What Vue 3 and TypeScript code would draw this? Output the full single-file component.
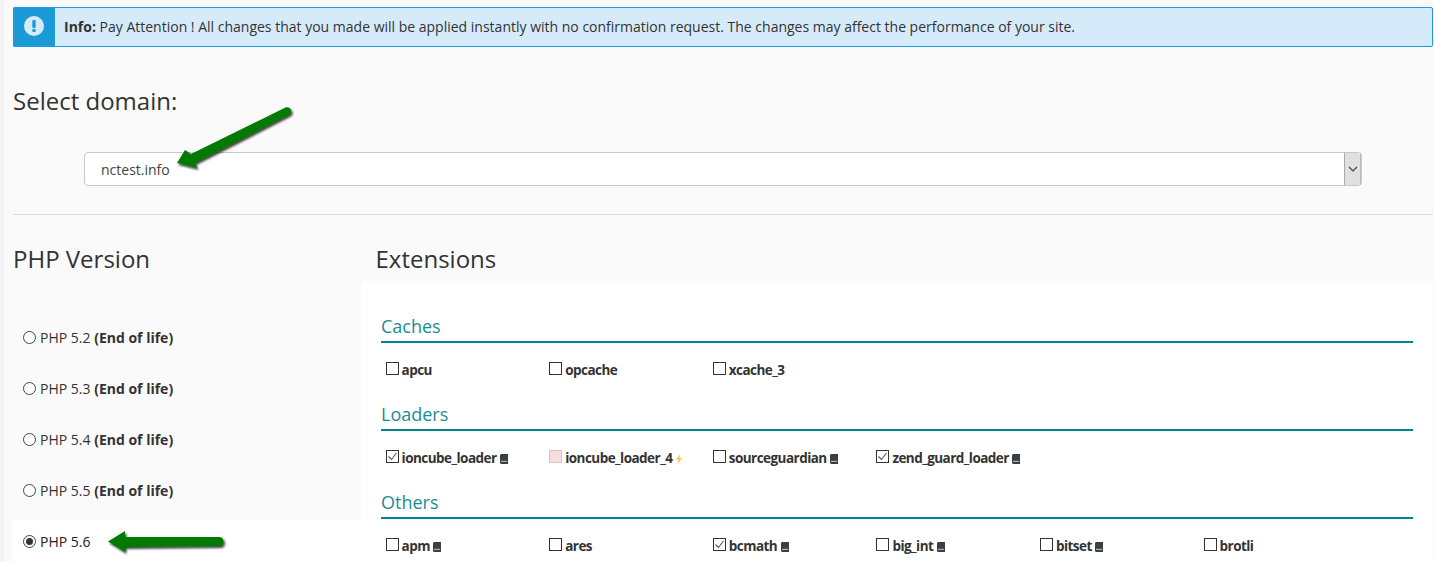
<script setup lang="ts">
interface Ext { name: string; checked?: boolean; icon?: 'book' | 'bolt'; disabled?: boolean }
const versions = [
  { label: 'PHP 5.2', eol: true },
  { label: 'PHP 5.3', eol: true },
  { label: 'PHP 5.4', eol: true },
  { label: 'PHP 5.5', eol: true },
  { label: 'PHP 5.6', eol: false },
]
const groups: { title: string; items: Ext[] }[] = [
  { title: 'Caches', items: [{ name: 'apcu' }, { name: 'opcache' }, { name: 'xcache_3' }] },
  { title: 'Loaders', items: [
    { name: 'ioncube_loader', checked: true, icon: 'book' },
    { name: 'ioncube_loader_4', disabled: true, icon: 'bolt' },
    { name: 'sourceguardian', icon: 'book' },
    { name: 'zend_guard_loader', checked: true, icon: 'book' },
  ] },
  { title: 'Others', items: [
    { name: 'apm', icon: 'book' },
    { name: 'ares' },
    { name: 'bcmath', checked: true, icon: 'book' },
    { name: 'big_int', icon: 'book' },
    { name: 'bitset', icon: 'book' },
    { name: 'brotli' },
  ] },
]
</script>

<template>
  <div class="page">
    <div class="alert">
      <div class="alert-icon">
        <svg width="20" height="20" viewBox="0 0 20 20"><circle cx="10" cy="10" r="10" fill="#d6ebf9" /><rect x="8.300" y="4" width="3.400" height="8" rx="1" fill="#1a9bd8" /><rect x="8.300" y="13" width="3.400" height="3" rx="1" fill="#1a9bd8" /></svg>
      </div>
      <div class="alert-text"><b>Info:</b> Pay Attention ! All changes that you made will be applied instantly with no confirmation request. The changes may affect the performance of your site.</div>
    </div>

    <h2 class="domain-title">Select domain:</h2>
    <div class="select">
      <span class="select-value">nctest.info</span>
      <span class="select-btn">
        <svg width="10" height="6" viewBox="0 0 10 6"><path d="M1 1l4 4 4-4" fill="none" stroke="#444" stroke-width="1.200" /></svg>
      </span>
    </div>
    <div class="divider"></div>

    <div class="columns">
      <div class="left">
        <h2 class="col-title">PHP Version</h2>
        <div class="versions">
          <label v-for="v in versions" :key="v.label" class="version" :class="{ current: !v.eol }">
            <span class="radio" :class="{ on: !v.eol }"></span>
            <span>{{ v.label }}<b v-if="v.eol"> (End of life)</b></span>
          </label>
        </div>
      </div>
      <div class="right">
        <h2 class="col-title ext-title">Extensions</h2>
        <div class="panel">
          <section v-for="g in groups" :key="g.title" class="group">
            <h3 class="group-title">{{ g.title }}</h3>
            <div class="ext-grid">
              <div v-for="e in g.items" :key="e.name" class="ext">
                <span class="check" :class="{ disabled: e.disabled }">
                  <svg v-if="e.checked" width="11" height="11" viewBox="0 0 11 11"><path d="M1.500 5.500l3 3 5-6.500" fill="none" stroke="#555" stroke-width="1.100" /></svg>
                </span>
                <b class="ext-name">{{ e.name }}</b>
                <svg v-if="e.icon === 'book'" class="ico" width="10" height="10" viewBox="0 0 10 10"><path d="M1 1.500C1 .6 1.600 0 2.500 0H9v10H2.500C1.600 10 1 9.400 1 8.500z" fill="#3a3f44" /><rect x="2" y="6.800" width="6" height="1.200" fill="#aeb3b7" /></svg>
                <svg v-else-if="e.icon === 'bolt'" class="ico" width="8" height="10" viewBox="0 0 8 10"><path d="M5 0L1 5.500h2.500L2.500 10 7 4H4.300z" fill="#f7c04a" /></svg>
              </div>
            </div>
          </section>
        </div>
      </div>
    </div>

    <svg class="arrow arrow-a" width="130" height="70" viewBox="0 0 130 70">
      <defs><filter id="sh" x="-20%" y="-40%" width="150%" height="190%"><feDropShadow dx="1.500" dy="2" stdDeviation="1.200" flood-color="#000" flood-opacity=".75" /></filter></defs>
      <path d="M3 58L11 45 17 49 111.500 2.500C114 1.500 116.500 3 117 5 117.500 7.500 116.500 9 114.500 10L21 58 23 63z" fill="#067a06" filter="url(#sh)" />
    </svg>
    <svg class="arrow arrow-b" width="124" height="26" viewBox="0 0 124 26">
      <path d="M1 12.500L18 2 18 8 112 8C115 8 116.500 10 116.500 12.500 116.500 15 115 17 112 17L18 18 18 23z" fill="#067a06" filter="url(#sh)" />
    </svg>
  </div>
</template>

<style>
html, body { margin: 0; background: #fafafa; }
</style>

<style scoped>
.page {
  position: relative;
  width: 1434px;
  height: 562px;
  overflow: hidden;
  box-sizing: border-box;
  padding: 7px 1px 0 9px;
  background: #fafafa;
  border-left: 4px solid #f4f4f4;
  font-family: "Open Sans", "Liberation Sans", sans-serif;
  color: #333;
}
.alert {
  display: flex;
  height: 40px;
  box-sizing: border-box;
  border: 1px solid #1a9bd8;
  border-radius: 2px;
  background: #d6ebf9;
}
.alert-icon {
  width: 42px;
  flex: none;
  margin: -1px 0 -1px -1px;
  background: #1a9bd8;
  border-radius: 2px 0 0 2px;
  display: flex;
  align-items: center;
  justify-content: center;
}
.alert-icon svg { margin-top: -2px; }
.alert-text {
  margin-left: 9px;
  font-size: 14px;
  line-height: 38px;
  color: #333;
  white-space: nowrap;
}
.domain-title {
  margin: 38px 0 0;
  font-size: 24px;
  font-weight: 400;
  line-height: 32px;
}
.select {
  margin: 35px 71px 0 71px;
  height: 34px;
  box-sizing: border-box;
  display: flex;
  justify-content: space-between;
  background: #fff;
  border: 1px solid #c8c8c8;
  border-radius: 4px;
}
.select-value {
  padding-left: 16px;
  font-size: 14px;
  line-height: 34px;
  color: #444;
}
.select-btn {
  width: 15px;
  background: #e0e0e0;
  border-left: 1px solid #aaa;
  border-right: 1px solid #bbb;
  display: flex;
  align-items: center;
  justify-content: center;
}
.divider {
  margin-top: 28px;
  height: 1px;
  background: #ddd;
}
.columns {
  display: grid;
  grid-template-columns: 348px 1072px;
}
.col-title {
  margin: 0;
  padding-top: 27px;
  font-size: 24px;
  font-weight: 400;
  line-height: 33px;
  height: 66px;
  box-sizing: border-box;
}
.ext-title { padding-left: 14.500px; }
.versions { padding-top: 35px; }
.version {
  display: flex;
  align-items: center;
  height: 42px;
  margin-bottom: 9px;
  padding-left: 10px;
  font-size: 14px;
  color: #333;
}
.version.current { background: #fff; color: #222; }
.radio {
  width: 13px;
  height: 13px;
  box-sizing: border-box;
  border: 1px solid #444;
  border-radius: 50%;
  margin-right: 4px;
  background: #fff;
  display: flex;
  align-items: center;
  justify-content: center;
}
.radio.on::after {
  content: "";
  width: 7px;
  height: 7px;
  border-radius: 50%;
  background: #333;
}
.panel {
  background: #fff;
  padding: 31px 20px 0;
  height: 300px;
  box-sizing: border-box;
}
.group { height: 88px; }
.group-title {
  margin: 0;
  font-size: 18px;
  font-weight: 400;
  line-height: 28px;
  height: 29px;
  color: #1b8d94;
  border-bottom: 2px solid #00868b;
}
.ext-grid {
  display: grid;
  grid-template-columns: repeat(6, 163.600px);
  padding: 17px 0 0 4.600px;
}
.ext {
  display: flex;
  align-items: center;
  height: 20px;
  white-space: nowrap;
}
.check {
  width: 13px;
  height: 13px;
  box-sizing: border-box;
  border: 1px solid #333;
  margin: -3px 3px 0 0;
  background: #fff;
  display: flex;
  align-items: center;
  justify-content: center;
}
.check.disabled {
  background: #f5dede;
  border-color: #d9c4c4;
}
.ext-name {
  font-size: 13.500px;
  font-weight: 700;
  letter-spacing: -0.54px;
  color: #333;
}
.ico { margin: 2px 0 0 2.500px; }
.arrow { position: absolute; overflow: visible; }
.arrow-a { left: 170px; top: 105px; }
.arrow-b { left: 103px; top: 529px; }
</style>
